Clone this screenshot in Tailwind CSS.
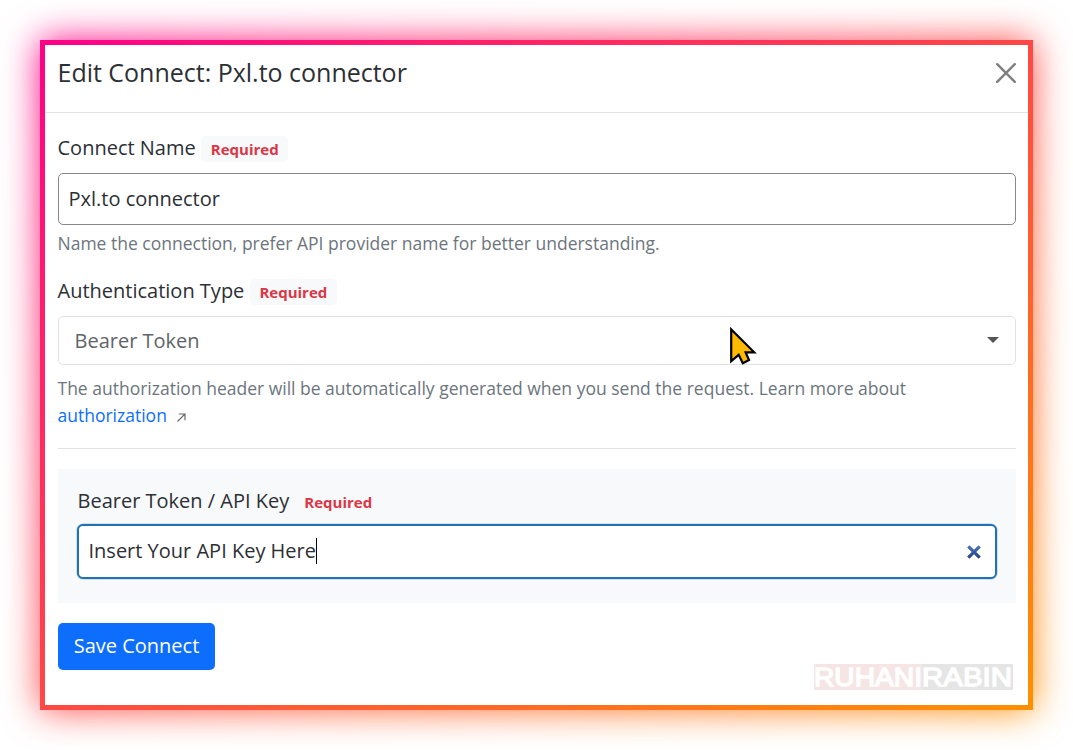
<!DOCTYPE html>
<html lang="en">
<head>
<meta charset="utf-8">
<title>Edit Connect</title>
<script src="https://cdn.jsdelivr.net/npm/@tailwindcss/browser@4"></script>
</head>
<body class="bg-white font-['Open_Sans',sans-serif] text-[#2c3035]">
<div class="relative h-[750px] w-[1073px] overflow-hidden p-10">
  <div class="absolute inset-10 bg-[linear-gradient(to_bottom_right,#ff0088,#ff4846_50%,#ff9000)] blur-[18px]"></div>
  <div class="relative h-[670px] w-[993px] bg-[linear-gradient(to_bottom_right,#ff0088,#ff4846_50%,#ff9000)] p-[5px]">
    <div class="flex h-full flex-col bg-white">
      <header class="flex h-[68px] shrink-0 items-start justify-between border-b border-[#dee2e6] pt-[10px] pr-[12px] pl-[12.5px]">
        <h1 class="-mt-px text-[25px] leading-[36px] tracking-[-0.01px] whitespace-nowrap">Edit Connect: Pxl.to connector</h1>
        <svg class="mt-[8px] size-5" viewBox="0 0 20 20" fill="none" stroke="#7f7f7f" stroke-width="2.4" stroke-linecap="round"><path d="M1.2 1.2L18.8 18.8M18.8 1.2L1.2 18.8"/></svg>
      </header>
      <main class="flex flex-col items-stretch pr-[12px] pl-[13px]">
        <div class="mt-[20px] -ml-[0.5px] flex h-[30px] items-center">
          <label class="text-[20px] leading-[30px]">Connect Name</label>
          <span class="mt-[2px] ml-[5.5px] flex h-[26px] w-[87px] items-center justify-center rounded-[5px] bg-[#f8f9fa] text-[15px] font-bold text-[#dc3545]">Required</span>
        </div>
        <div class="mt-[10px] flex h-[52px] items-center rounded-[5px] border border-[#86888c] px-[9.5px] text-[20px]">Pxl.to connector</div>
        <p class="mt-[5px] -ml-[0.5px] text-[17.5px] leading-[27px] text-[#6c757d]">Name the connection, prefer API provider name for better understanding.</p>
        <div class="mt-[19px] -ml-[0.5px] flex h-[30px] items-center">
          <label class="text-[20px] leading-[30px]">Authentication Type</label>
          <span class="mt-[2px] ml-[5.5px] flex h-[26px] w-[87px] items-center justify-center rounded-[5px] bg-[#f8f9fa] text-[15px] font-bold text-[#dc3545]">Required</span>
        </div>
        <div class="mt-[10px] flex h-[49px] items-center justify-between rounded-[5px] border border-[#dee2e6] pr-[16px] pl-[15.5px] text-[20px] text-[#606468]">
          <span>Bearer Token</span>
          <svg class="-mt-[2px] h-[6px] w-[12px]" viewBox="0 0 12 6" fill="#555"><path d="M0 0H12L6 6Z"/></svg>
        </div>
        <p class="mt-[10px] -ml-[0.5px] text-[17.5px] leading-[27px] text-[#6c757d]">The authorization header will be automatically generated when you send the request. Learn more about<br><span class="text-[#0d6efd]">authorization</span><svg class="ml-[10px] inline-block size-[9px]" viewBox="0 0 9 9" fill="none" stroke="#666" stroke-width="1.2"><path d="M.5 8.5L7.8 1.2M1.8 1H8V7.2"/></svg></p>
        <div class="mt-[19px] h-px bg-[#dee2e6]"></div>
        <section class="mt-[20px] h-[134px] bg-[#f8f9fb] px-[19px] pt-[17px]">
          <div class="flex h-[30px] items-center pl-[0.5px]">
            <label class="text-[20px] leading-[30px]">Bearer Token / API Key</label>
            <span class="mt-[2px] ml-[5.5px] flex h-[26px] w-[87px] items-center justify-center text-[15px] font-bold text-[#dc3545]">Required</span>
          </div>
          <div class="mt-[8px] flex h-[55px] items-center justify-between rounded-[6px] border-2 border-[#2271b1] bg-white pr-[14px] pl-[9.5px] text-[20px] shadow-[0_0_0_0.5px_#2271b160]">
            <span class="flex items-center pb-[2px]">Insert Your API Key Here<span class="h-[26px] w-px bg-black"></span></span>
            <svg class="size-[14px]" viewBox="0 0 14 14" fill="none" stroke="url(#clr)" stroke-width="3.2"><defs><linearGradient id="clr" gradientUnits="userSpaceOnUse" x1="0" y1="0" x2="0" y2="14"><stop stop-color="#4876c8"/><stop offset="1" stop-color="#243f7c"/></linearGradient></defs><path d="M1.3 1.3L12.7 12.7M12.7 1.3L1.3 12.7"/></svg>
          </div>
        </section>
        <button class="mt-[20px] h-[47px] w-[157px] rounded-[5px] bg-[#0d6efd] pb-[2px] text-[20px] text-white">Save Connect</button>
      </main>
    </div>
  </div>
  <svg class="absolute top-[664px] left-[814px] h-[26px] w-[199px] font-['Liberation_Sans',sans-serif]" viewBox="0 0 199 26" fill="#fff" stroke="#fff" stroke-width="1.3" font-size="25"><path stroke="none" fill="#f6e5e5" d="M0 0H108V26H0Z"/><path stroke="none" fill="#e5e5e5" d="M108 0H199V26H108Z"/><text x="0" y="22" textLength="108" lengthAdjust="spacingAndGlyphs">RUHANI</text><text x="108" y="22" textLength="90" lengthAdjust="spacingAndGlyphs">RABIN</text></svg>
  <svg class="absolute top-[325px] left-[728px] h-[42px] w-[32px]" viewBox="0 0 32 42" fill="#ffb900" stroke="#000" stroke-width="2.2"><path d="M3.2 4.5V36.2L10.7 29.8L14.8 38.2L21 35L17.6 27.3H26.2Z"/></svg>
</div>
</body>
</html>
